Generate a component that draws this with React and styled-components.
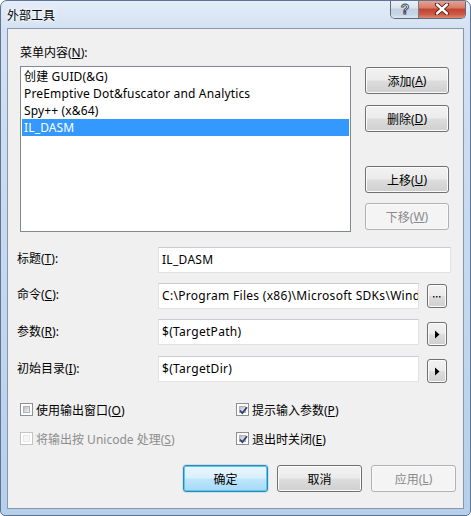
import React from 'react';
import styled, { createGlobalStyle, css } from 'styled-components';

const FONT = `"Noto Sans", "Noto Sans CJK SC", sans-serif`;

const Global = createGlobalStyle`
  html, body { margin: 0; padding: 0; background: #ffffff; }
  body { font-family: ${FONT}; font-size: 12px; color: #000; }
  * { box-sizing: border-box; }
`;

const Window = styled.div`
  width: 471px;
  height: 516px;
  border: 1px solid #5d7593;
  border-radius: 7px 7px 5px 5px;
  background: linear-gradient(to bottom, #e4edf8 0px, #d3e1f2 28px, #c3d7ef 60%, #b7cfeb 100%);
  display: flex;
  flex-direction: column;
  padding: 0 6px 6px 6px;
  overflow: hidden;
  font-family: ${FONT};
`;

const TitleBar = styled.div`
  height: 27px;
  display: flex;
  align-items: flex-start;
`;

const Title = styled.div`
  font-size: 12px;
  line-height: 16px;
  margin-top: 7px;
  color: #000;
  text-shadow: 0 0 6px #ffffff, 0 0 3px #ffffff;
  flex: 1;
`;

const CaptionGroup = styled.div`
  display: flex;
  height: 19px;
  margin-top: -1px;
  margin-right: -2px;
  border: 1px solid #5a6b82;
  border-top: none;
  border-radius: 0 0 5px 5px;
  overflow: hidden;
`;

const CaptionButton = styled.div`
  width: ${p => p.$w}px;
  height: 100%;
  display: flex;
  align-items: center;
  justify-content: center;
  ${p => p.$close ? css`
    background: linear-gradient(to bottom, #e8a898 0%, #d87a68 45%, #c0442e 50%, #cc5a48 80%, #e08a70 100%);
  ` : css`
    border-right: 1px solid #6d7d93;
    background: linear-gradient(to bottom, #eef3f9 0%, #d9e3ef 45%, #c2cfde 50%, #c9d6e5 80%, #dbe5f0 100%);
  `}
`;

const Client = styled.div`
  flex: 1;
  border: 1px solid #8797ad;
  background: #f0f0f0;
  display: flex;
  flex-direction: column;
`;

const TopSection = styled.div`
  padding: 16px 0 0 12px;
`;

const GroupLabel = styled.div`
  height: 16px;
  line-height: 16px;
  margin-bottom: 5px;
  font-size: 12px;
`;

const ListRow = styled.div`
  display: flex;
  gap: 14px;
`;

const ListBox = styled.div`
  width: 331px;
  height: 166px;
  border: 1px solid #828790;
  background: #ffffff;
  padding: 1px;
  display: flex;
  flex-direction: column;
`;

const ListItem = styled.div`
  height: 17px;
  line-height: 17px;
  padding-left: 2px;
  font-size: 12px;
  letter-spacing: 0.15px;
  white-space: nowrap;
  ${p => p.$selected && css`
    background: #3399ff;
    color: #ffffff;
  `}
`;

const ButtonColumn = styled.div`
  display: flex;
  flex-direction: column;
  width: 84px;
`;

const PushButton = styled.div`
  width: ${p => p.$w || 84}px;
  height: ${p => p.$h || 27}px;
  margin-top: ${p => p.$mt || 0}px;
  border: 1px solid #707070;
  border-radius: 3px;
  box-shadow: inset 0 0 0 1px #fbfbfb;
  background: linear-gradient(to bottom, #f2f2f2 0%, #ebebeb 48%, #dddddd 52%, #cfcfcf 100%);
  display: flex;
  align-items: center;
  justify-content: center;
  font-size: 12px;
  color: #000;
  flex: none;
  ${p => p.$default && css`
    border-color: #3c7fb1;
    box-shadow: inset 0 0 0 1px #48d1f8, 0 0 0 1px rgba(140, 200, 235, 0.35);
    background: linear-gradient(to bottom, #eaf6fd 0%, #d9f0fc 48%, #bee6fd 52%, #a7d9f5 100%);
  `}
  ${p => p.$disabled && css`
    border-color: #adb2b5;
    box-shadow: inset 0 0 0 1px #fafafa;
    background: #f4f4f4;
    color: #8a8a8a;
  `}
`;

const FormGrid = styled.div`
  margin-top: 15px;
  padding-left: 9px;
  display: grid;
  grid-template-columns: 141px 1fr;
  row-gap: 10px;
  align-items: center;
`;

const FieldLabel = styled.div`
  font-size: 12px;
  line-height: 16px;
  margin-top: -2px;
`;

const FieldGroup = styled.div`
  display: flex;
  align-items: flex-start;
  gap: 8px;
`;

const TextBox = styled.div`
  width: ${p => p.$w}px;
  height: 26px;
  border: 1px solid #dfe2e7;
  border-top-color: #c8ccd3;
  background: #ffffff;
  padding-left: 3px;
  font-size: 12px;
  letter-spacing: 0.3px;
  line-height: 23px;
  white-space: nowrap;
  overflow: hidden;
`;

const SmallButton = styled(PushButton)`
  width: 20px;
  height: 24px;
  margin-top: ${p => p.$mt || 1}px;
`;

const CheckGrid = styled.div`
  margin-top: 18px;
  padding-left: 12px;
  display: grid;
  grid-template-columns: 216px 1fr;
  row-gap: 12px;
`;

const CheckItem = styled.div`
  display: flex;
  align-items: center;
  gap: 3px;
  height: 17px;
  font-size: 12px;
  color: ${p => p.$disabled ? '#8d8d8d' : '#000'};
`;

const Box = styled.div`
  width: 13px;
  height: 13px;
  border: 1px solid ${p => p.$disabled ? '#c4c4c4' : '#8e8f8f'};
  background: #ffffff;
  padding: 2px;
  position: relative;
  flex: none;
`;

const BoxInner = styled.div`
  width: 100%;
  height: 100%;
  background: ${p => p.$disabled
    ? '#f6f6f6'
    : 'linear-gradient(135deg, #b9bcc0 0%, #dcdddf 60%, #f2f2f2 100%)'};
  border: 1px solid ${p => p.$disabled ? '#e8e8e8' : '#aeb2b7'};
`;

const CheckMark = styled.svg`
  position: absolute;
  left: 1px;
  top: 1px;
`;

const BottomBar = styled.div`
  margin-top: 18px;
  padding-right: 7px;
  display: flex;
  justify-content: flex-end;
  gap: 9px;
`;

const U = styled.span`
  text-decoration: underline;
  text-underline-offset: 1px;
`;

function Check({ checked, disabled, children }) {
  return (
    <CheckItem $disabled={disabled}>
      <Box $disabled={disabled}>
        <BoxInner $disabled={disabled} />
        {checked && (
          <CheckMark width="11" height="11" viewBox="0 0 11 11">
            <path d="M2 5.5 L4.3 8 L9 2.2" fill="none" stroke="#2d3f7a" strokeWidth="1.8" />
          </CheckMark>
        )}
      </Box>
      <span>{children}</span>
    </CheckItem>
  );
}

function Arrow() {
  return (
    <svg width="6" height="9" viewBox="0 0 6 9">
      <path d="M1 0.5 L5.5 4.5 L1 8.5 Z" fill="#000" />
    </svg>
  );
}

export default function App() {
  return (
    <>
      <Global />
      <Window>
        <TitleBar>
          <Title>外部工具</Title>
          <CaptionGroup>
            <CaptionButton $w={28}>
              <svg width="12" height="14" viewBox="0 0 12 14">
                <text x="6" y="12" textAnchor="middle" fontFamily="Liberation Sans, sans-serif" fontSize="14" fontWeight="bold" fill="#f4f6f9" stroke="#3a4556" strokeWidth="0.9">?</text>
              </svg>
            </CaptionButton>
            <CaptionButton $w={46} $close>
              <svg width="16" height="12" viewBox="0 0 16 12">
                <path d="M3 1.5 L13 10.5 M13 1.5 L3 10.5" stroke="#4a1a12" strokeWidth="4.2" strokeLinecap="round" />
                <path d="M3 1.5 L13 10.5 M13 1.5 L3 10.5" stroke="#ffffff" strokeWidth="2.4" strokeLinecap="round" />
              </svg>
            </CaptionButton>
          </CaptionGroup>
        </TitleBar>
        <Client>
          <TopSection>
            <GroupLabel>菜单内容(<U>N</U>):</GroupLabel>
            <ListRow>
              <ListBox>
                <ListItem>创建 GUID(&amp;G)</ListItem>
                <ListItem>PreEmptive Dot&amp;fuscator and Analytics</ListItem>
                <ListItem>Spy++ (x&amp;64)</ListItem>
                <ListItem $selected>IL_DASM</ListItem>
              </ListBox>
              <ButtonColumn>
                <PushButton $mt={1}>添加(<U>A</U>)</PushButton>
                <PushButton $mt={11}>删除(<U>D</U>)</PushButton>
                <PushButton $mt={34}>上移(<U>U</U>)</PushButton>
                <PushButton $mt={10} $disabled>下移(<U>W</U>)</PushButton>
              </ButtonColumn>
            </ListRow>
          </TopSection>

          <FormGrid>
            <FieldLabel>标题(<U>T</U>):</FieldLabel>
            <FieldGroup>
              <TextBox $w={293}>IL_DASM</TextBox>
            </FieldGroup>

            <FieldLabel>命令(<U>C</U>):</FieldLabel>
            <FieldGroup>
              <TextBox $w={261}>C:\Program Files (x86)\Microsoft SDKs\Windows\v8.0A\bin\NETFX 4.0 Tools\ildasm.exe</TextBox>
              <SmallButton>
                <svg width="8" height="4" viewBox="0 0 8 4"><rect x="0" y="2" width="1.5" height="1.5" fill="#222"/><rect x="3" y="2" width="1.5" height="1.5" fill="#222"/><rect x="6" y="2" width="1.5" height="1.5" fill="#222"/></svg>
              </SmallButton>
            </FieldGroup>

            <FieldLabel>参数(<U>R</U>):</FieldLabel>
            <FieldGroup>
              <TextBox $w={261}>$(TargetPath)</TextBox>
              <SmallButton $mt={3}><Arrow /></SmallButton>
            </FieldGroup>

            <FieldLabel>初始目录(<U>I</U>):</FieldLabel>
            <FieldGroup>
              <TextBox $w={261}>$(TargetDir)</TextBox>
              <SmallButton $mt={3}><Arrow /></SmallButton>
            </FieldGroup>
          </FormGrid>

          <CheckGrid>
            <Check>使用输出窗口(<U>O</U>)</Check>
            <Check checked>提示输入参数(<U>P</U>)</Check>
            <Check disabled>将输出按 Unicode 处理(<U>S</U>)</Check>
            <Check checked>退出时关闭(<U>E</U>)</Check>
          </CheckGrid>

          <BottomBar>
            <PushButton $w={85} $default>确定</PushButton>
            <PushButton $w={85}>取消</PushButton>
            <PushButton $w={85} $disabled>应用(<U>L</U>)</PushButton>
          </BottomBar>
        </Client>
      </Window>
    </>
  );
}
